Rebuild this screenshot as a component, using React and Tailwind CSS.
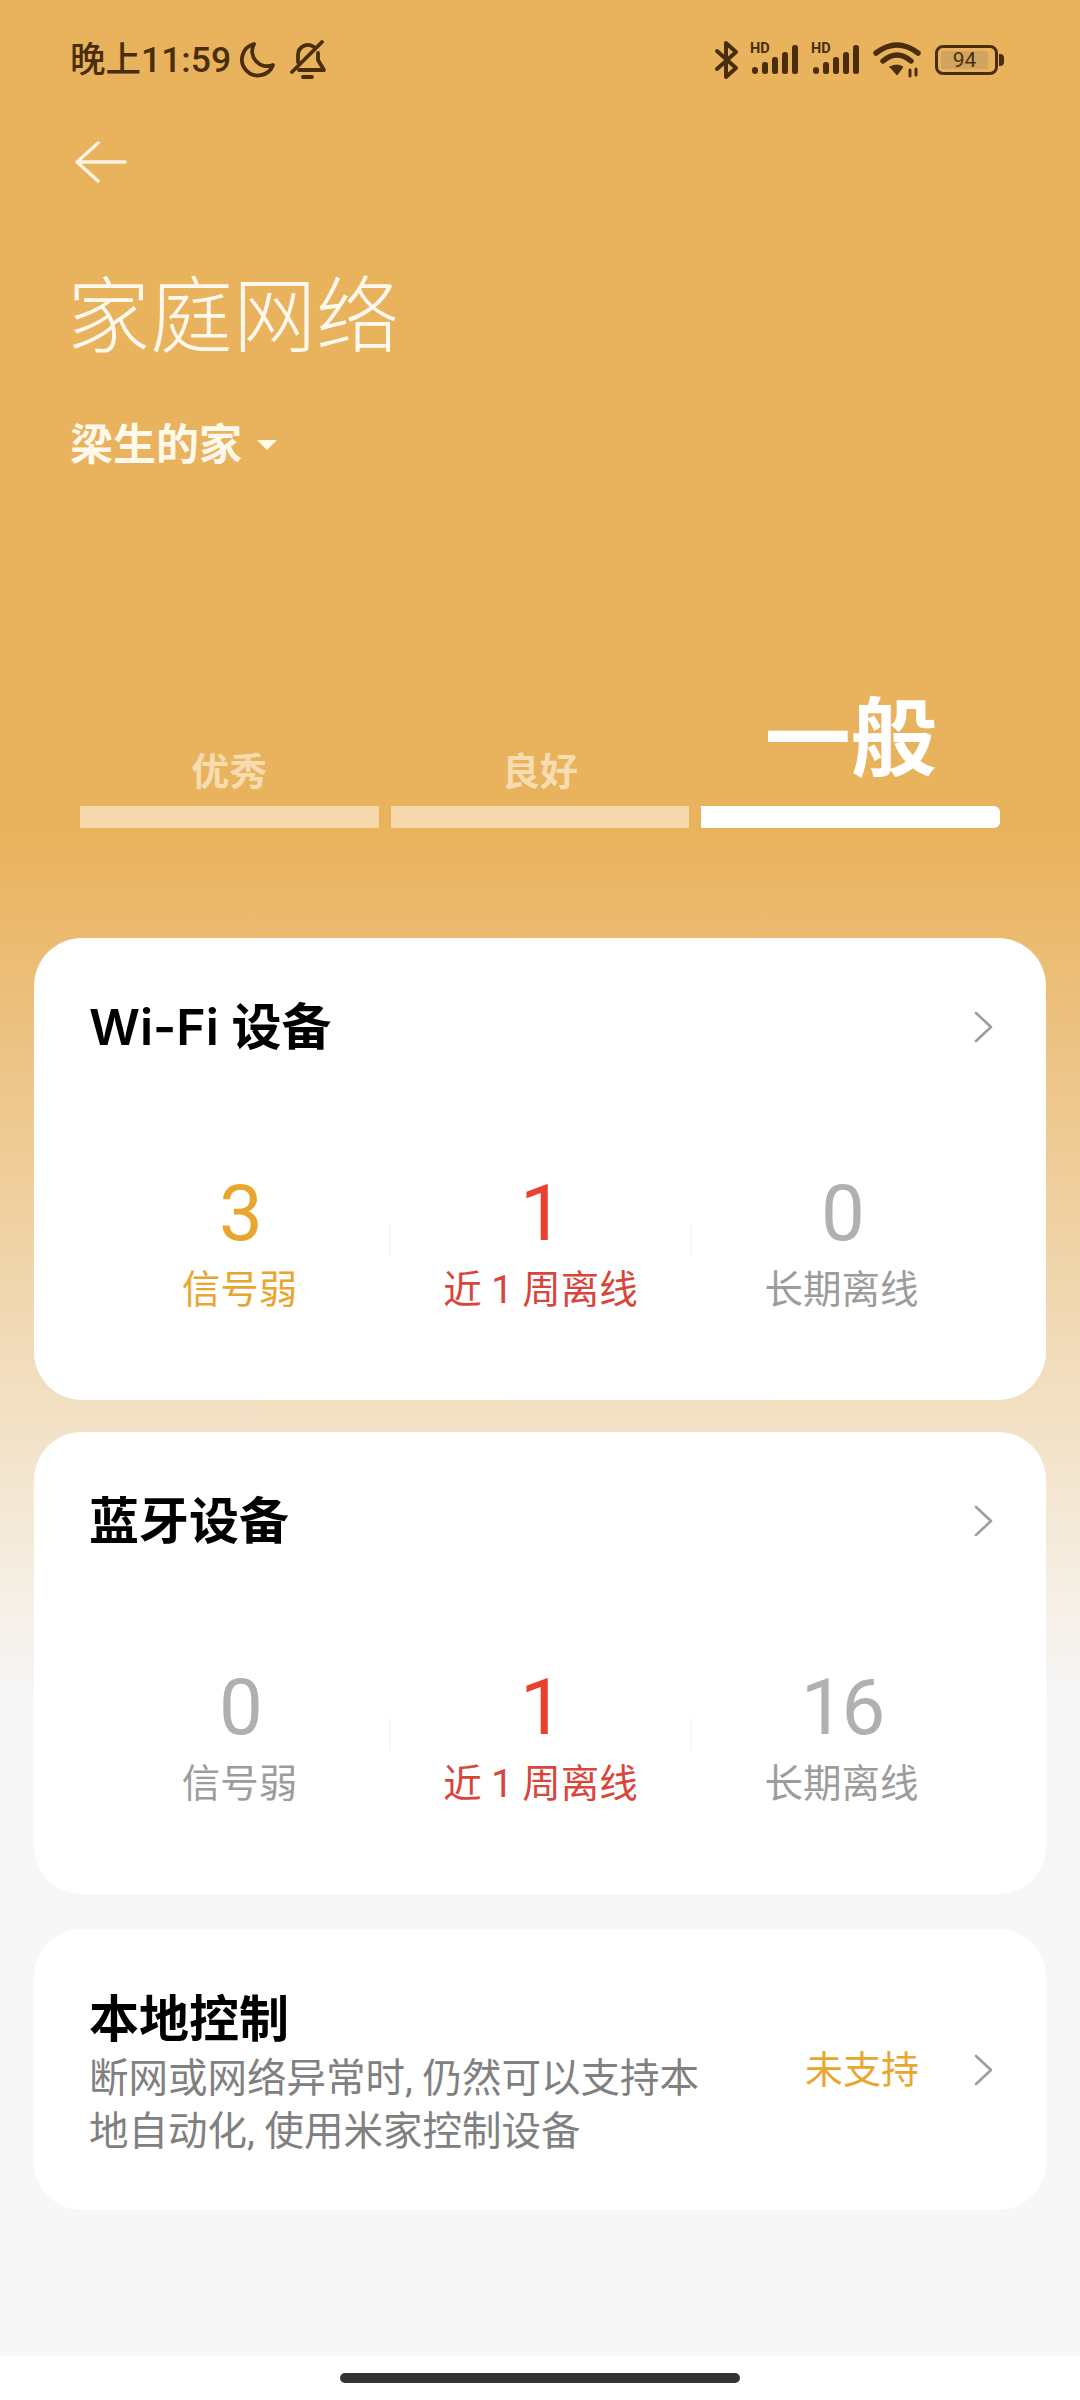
const cjk = "font-['Roboto','Noto_Sans_CJK_SC',sans-serif]";

function Chevron({ className }) {
  return (
    <svg width="20" height="32" viewBox="0 0 20 32" fill="none" stroke="#9e9e9e" strokeWidth="2.6" strokeLinecap="round" strokeLinejoin="round" className={className}>
      <path d="M2 2 L17 16 L2 30" />
    </svg>
  );
}

function Signal() {
  return (
    <svg width="50" height="44" viewBox="0 -4 50 44" fill="currentColor">
      <text x="0" y="11" fontSize="14.5" fontWeight="700" fontFamily="Roboto, sans-serif">HD</text>
      <rect x="2" y="25" width="6" height="7" rx="3" />
      <rect x="12" y="20" width="6" height="12" rx="2.5" />
      <rect x="22" y="15" width="6" height="17" rx="2.5" />
      <rect x="32" y="10" width="6" height="22" rx="2.5" />
      <rect x="42" y="3" width="6" height="29" rx="2.5" />
    </svg>
  );
}

function StatusIcons() {
  return (
    <div className="flex items-center text-[#4a2e0b]">
      <svg width="26" height="40" viewBox="0 0 26 40" fill="none" stroke="currentColor" strokeWidth="4" strokeLinecap="round" strokeLinejoin="round" className="mr-[10px]">
        <path d="M3 11 L22 28 L12 37 L12 3 L22 12 L3 29" />
      </svg>
      <Signal />
      <div className="w-[11px]" />
      <Signal />
      <svg width="50" height="36" viewBox="0 0 50 36" className="ml-[12px]" fill="none" stroke="currentColor" strokeLinecap="round">
        <path d="M3 11 Q24 -5 45 11" strokeWidth="5.5" />
        <path d="M10 19 Q24 7 38 19" strokeWidth="5.5" />
        <path d="M17 25 L24 33 L30 25 Q24 21 17 25 Z" fill="currentColor" strokeWidth="1" />
        <path d="M37 28 V34 M43 27 V33" strokeWidth="3" />
      </svg>
      <div className="ml-[12px] flex items-center">
        <div className="w-[63px] h-[30px] rounded-[8px] border-[3px] border-[#4a2e0b] p-[3px]">
          <div className={`h-full w-[92%] rounded-[2px] bg-[#d2a461] flex items-center justify-center text-[21px] leading-none text-[#4a2e0b] ${cjk}`}>
            94
          </div>
        </div>
        <div className="ml-[1px] w-[5px] h-[12px] rounded-r-sm bg-[#4a2e0b]" />
      </div>
    </div>
  );
}

function Stat({ value, label, valueColor, labelColor }) {
  return (
    <div className="flex-1 flex flex-col items-center">
      <div className={`text-[78px] leading-[80px] tracking-[-3px] font-normal ${valueColor}`}>{value}</div>
      <div className={`mt-[11px] text-[38.5px] leading-[50px] ${labelColor}`}>{label}</div>
    </div>
  );
}

function Divider() {
  return <div className="w-[2px] h-[32px] mt-[50px] bg-[#f6f6f6]" />;
}

function DeviceCard({ title, stats }) {
  return (
    <div className="mx-[34px] h-[462px] rounded-[48px] bg-white">
      <div className="flex items-center justify-between pl-[55px] pr-[52px] pt-[60px]">
        <div className="font-['Inter','Noto_Sans_CJK_SC',sans-serif] text-[50px] leading-[58px] font-semibold text-black">{title}</div>
        <Chevron />
      </div>
      <div className="flex pl-[56px] pr-[55px] pt-[118px]">
        <Stat {...stats[0]} />
        <Divider />
        <Stat {...stats[1]} />
        <Divider />
        <Stat {...stats[2]} />
      </div>
    </div>
  );
}

function Level({ label }) {
  return (
    <div className="flex-1 flex flex-col items-center">
      <div className="text-[38px] leading-[50px] font-bold text-[#f6dcb0]">{label}</div>
      <div className="mt-[9px] w-full h-[22px] bg-[#f5d9ac]" />
    </div>
  );
}

export default function App() {
  const orange = { valueColor: "text-[#e9a62f]", labelColor: "text-[#e9a62f]" };
  const red = { valueColor: "text-[#e8412f]", labelColor: "text-[#d9453a]" };
  const gray = { valueColor: "text-[#b0b0b0]", labelColor: "text-[#9c9c9c]" };

  return (
    <div className={`w-[1080px] h-[2400px] flex flex-col overflow-hidden bg-[linear-gradient(180deg,#e9b25d_830px,#f7f7f7_1700px)] ${cjk}`}>
      <div className="flex items-center justify-between pl-[70px] pr-[76px] h-[44px] mt-[38px]">
        <div className="flex items-center text-[#4a2e0b]">
          <span className="text-[35.5px] leading-[44px] font-medium">晚上11:59</span>
          <svg width="38" height="38" viewBox="0 0 38 38" fill="none" stroke="currentColor" strokeWidth="3.8" strokeLinecap="round" strokeLinejoin="round" className="ml-[7px]">
            <path d="M16 3 A16 16 0 1 0 35 24 A15 15 0 0 1 16 3 Z" />
          </svg>
          <svg width="38" height="40" viewBox="0 0 38 40" fill="none" stroke="currentColor" strokeWidth="3.8" strokeLinecap="round" strokeLinejoin="round" className="ml-[13px]">
            <path d="M9 22 V15 A10 10 0 0 1 25 7 M29 13 V20 L35 30 H10" />
            <path d="M3 32 L33 2" />
            <path d="M14 37 H23" />
          </svg>
        </div>
        <StatusIcons />
      </div>

      <div className="pl-[75px] mt-[59px]">
        <svg width="52" height="42" viewBox="0 0 52 42" fill="none" stroke="#fdf3e2" strokeWidth="3.5" strokeLinecap="round" strokeLinejoin="round">
          <path d="M23 2 L2 21 L23 40 M2 21 H50" />
        </svg>
      </div>

      <div className="pl-[67px] mt-[85px] text-[83px] leading-[100px] font-light text-[#fff8ee]">家庭网络</div>

      <div className="pl-[70px] mt-[47px] flex items-center text-[#fff8ec]">
        <span className="text-[43px] leading-[60px] font-semibold">梁生的家</span>
        <div className="ml-[15px] w-0 h-0 border-x-[10px] border-x-transparent border-t-[10px] border-t-[#fff8ec]" />
      </div>

      <div className="flex gap-[12px] px-[80px] mt-[216px] items-end">
        <Level label="优秀" />
        <Level label="良好" />
        <div className="flex-1 flex flex-col items-center">
          <div className="text-[86px] leading-[100px] font-bold text-white">一般</div>
          <div className="mt-[15px] w-full h-[22px] rounded-r-[6px] bg-white" />
        </div>
      </div>

      <div className="mt-[110px] flex flex-col gap-[32px]">
        <DeviceCard
          title="Wi-Fi 设备"
          stats={[
            { value: "3", label: "信号弱", ...orange },
            { value: "1", label: "近 1 周离线", ...red },
            { value: "0", label: "长期离线", ...gray },
          ]}
        />
        <DeviceCard
          title="蓝牙设备"
          stats={[
            { value: "0", label: "信号弱", ...gray },
            { value: "1", label: "近 1 周离线", ...red },
            { value: "16", label: "长期离线", ...gray },
          ]}
        />
      </div>

      <div className="mx-[34px] mt-[35px] h-[281px] rounded-[48px] bg-white flex items-center pl-[55px] pr-[52px]">
        <div className="w-[640px] mt-[9px]">
          <div className="text-[50px] leading-[58px] font-semibold text-black">本地控制</div>
          <div className="mt-[3px] text-[39.5px] leading-[53px] text-[#808080]">断网或网络异常时, 仍然可以支持本地自动化, 使用米家控制设备</div>
        </div>
        <div className="ml-auto flex items-center">
          <span className="text-[38px] leading-[50px] text-[#e9a62f]">未支持</span>
          <Chevron className="ml-[55px]" />
        </div>
      </div>

      <div className="mt-auto h-[44px] bg-white flex justify-center pt-[17px]">
        <div className="w-[400px] h-[10px] rounded-full bg-[#333333]" />
      </div>
    </div>
  );
}
